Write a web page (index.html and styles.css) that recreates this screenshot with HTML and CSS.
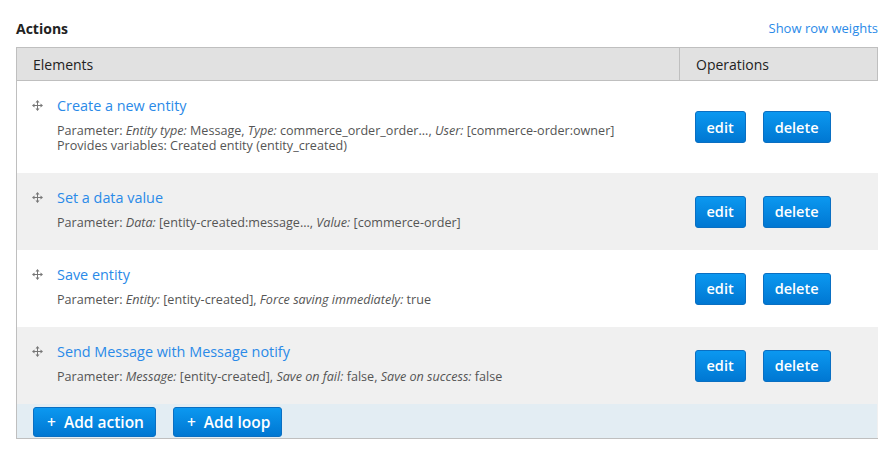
FILE: index.html
```html
<!DOCTYPE html>
<html>
<head>
<meta charset="utf-8">
<link rel="stylesheet" href="styles.css">
</head>
<body>
<div class="page">
  <div class="top">
    <h2 class="title">Actions</h2>
    <a class="weights" href="#">Show row weights</a>
  </div>
  <table class="rules">
    <thead>
      <tr><th class="c-el">Elements</th><th class="c-op">Operations</th></tr>
    </thead>
    <tbody>
      <tr class="odd">
        <td class="el">
          <div class="item">
            <svg class="drag" width="11" height="11" viewBox="0 0 11 11"><path d="M5.5 1v9M1 5.5h9" stroke="#777" stroke-width="1"/><path d="M5.5 0L3.5 2.5h4zM5.5 11l-2-2.5h4zM0 5.5l2.5-2v4zM11 5.5l-2.5-2v4z" fill="#777"/></svg>
            <div class="body">
              <a class="name" href="#">Create a new entity</a>
              <div class="desc">Parameter: <em>Entity type:</em> Message, <em>Type:</em> commerce_order_order..., <em>User:</em> [commerce-order:owner]<br>Provides variables: Created entity (entity_created)</div>
            </div>
          </div>
        </td>
        <td class="ops"><div class="btns"><a class="btn" href="#">edit</a><a class="btn" href="#">delete</a></div></td>
      </tr>
      <tr class="even">
        <td class="el">
          <div class="item">
            <svg class="drag" width="11" height="11" viewBox="0 0 11 11"><path d="M5.5 1v9M1 5.5h9" stroke="#777" stroke-width="1"/><path d="M5.5 0L3.5 2.5h4zM5.5 11l-2-2.5h4zM0 5.5l2.5-2v4zM11 5.5l-2.5-2v4z" fill="#777"/></svg>
            <div class="body">
              <a class="name" href="#">Set a data value</a>
              <div class="desc">Parameter: <em>Data:</em> [entity-created:message..., <em>Value:</em> [commerce-order]</div>
            </div>
          </div>
        </td>
        <td class="ops"><div class="btns"><a class="btn" href="#">edit</a><a class="btn" href="#">delete</a></div></td>
      </tr>
      <tr class="odd">
        <td class="el">
          <div class="item">
            <svg class="drag" width="11" height="11" viewBox="0 0 11 11"><path d="M5.5 1v9M1 5.5h9" stroke="#777" stroke-width="1"/><path d="M5.5 0L3.5 2.5h4zM5.5 11l-2-2.5h4zM0 5.5l2.5-2v4zM11 5.5l-2.5-2v4z" fill="#777"/></svg>
            <div class="body">
              <a class="name" href="#">Save entity</a>
              <div class="desc">Parameter: <em>Entity:</em> [entity-created], <em>Force saving immediately:</em> true</div>
            </div>
          </div>
        </td>
        <td class="ops"><div class="btns"><a class="btn" href="#">edit</a><a class="btn" href="#">delete</a></div></td>
      </tr>
      <tr class="even">
        <td class="el">
          <div class="item">
            <svg class="drag" width="11" height="11" viewBox="0 0 11 11"><path d="M5.5 1v9M1 5.5h9" stroke="#777" stroke-width="1"/><path d="M5.5 0L3.5 2.5h4zM5.5 11l-2-2.5h4zM0 5.5l2.5-2v4zM11 5.5l-2.5-2v4z" fill="#777"/></svg>
            <div class="body">
              <a class="name" href="#">Send Message with Message notify</a>
              <div class="desc">Parameter: <em>Message:</em> [entity-created], <em>Save on fail:</em> false, <em>Save on success:</em> false</div>
            </div>
          </div>
        </td>
        <td class="ops"><div class="btns"><a class="btn" href="#">edit</a><a class="btn" href="#">delete</a></div></td>
      </tr>
      <tr class="foot">
        <td colspan="2"><div class="add"><a class="btn big" href="#">+&nbsp; Add action</a><a class="btn big" href="#">+&nbsp; Add loop</a></div></td>
      </tr>
    </tbody>
  </table>
</div>
</body>
</html>
```

FILE: styles.css
```css
html, body { margin: 0; padding: 0; background: #fff; }
body { font-family: "Open Sans", "DejaVu Sans", sans-serif; color: #333; }
.page { padding: 17px 7px 0 16px; }
.top { display: flex; justify-content: space-between; align-items: center; height: 22px; margin-bottom: 8px; }
.title { margin: 0; font-size: 14px; font-weight: 700; color: #222; }
.weights { font-size: 13px; color: #2a8ae8; text-decoration: none; }
.rules { border-collapse: collapse; width: 862px; table-layout: fixed; }
.rules th { background: #e1e1e1; border: 1px solid #bfbfbf; font-weight: 400; font-size: 14px; color: #222; text-align: left; height: 32px; padding: 0 0 0 16px; }
.c-el { width: 646px; }
.c-op { width: 181px; }
.rules td { padding: 0; vertical-align: middle; }
.odd td { background: #fff; }
.even td { background: #f0f0f0; }
.rules tbody tr td:first-child { border-left: 1px solid #bfbfbf; }
.rules tbody tr td:last-child { border-right: 1px solid #f0f0f0; }
.rules tbody tr.odd td:last-child { border-right-color: #fff; }
.item { display: flex; padding: 15px 0 20px 15px; }
.drag { margin: 4px 14px 0 0; flex: none; }
.name { display: block; font-size: 14.4px; line-height: 20px; color: #2a8ae8; text-decoration: none; margin-bottom: 7px; }
.desc { font-size: 12.6px; line-height: 15px; color: #555; }
.desc em { font-style: italic; line-height: 15px; }
.btns { display: flex; gap: 17px; padding-left: 15px; }
.btn { display: inline-flex; align-items: center; justify-content: center; height: 30px; padding: 0 11px; border: 1px solid #0a6fc2; border-radius: 3px; background: linear-gradient(#0b98f0, #0077d2); color: #fff; font-size: 14.5px; font-weight: 600; text-decoration: none; }
.foot td { background: #e3edf3; border-right: 1px solid #bfbfbf; border-left: 1px solid #bfbfbf; border-bottom: 1px solid #bfbfbf; }
.add { display: flex; gap: 17px; padding: 3px 0 0 16px; height: 31px; }
.btn.big { height: 28px; padding: 0 11px 0 13px; font-size: 15.5px; }
```
